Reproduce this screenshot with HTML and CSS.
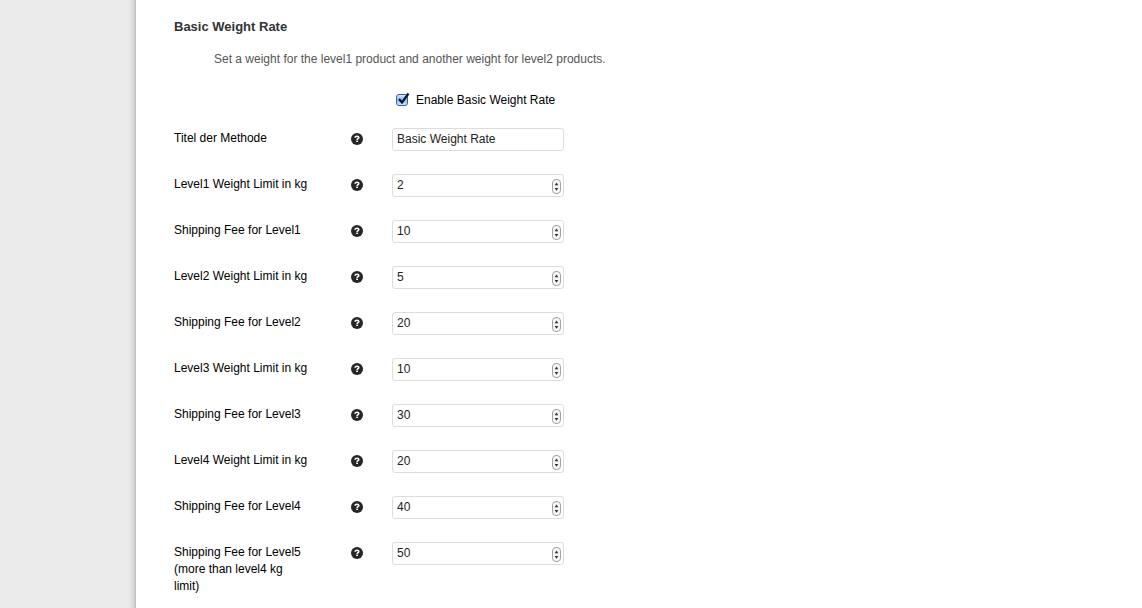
FILE: index.html
```html
<!DOCTYPE html>
<html lang="de">
<head>
<meta charset="utf-8">
<title>Basic Weight Rate</title>
<link rel="stylesheet" href="styles.css">
</head>
<body>
<svg class="defs" aria-hidden="true">
  <symbol id="help" viewBox="0 0 12 12">
    <circle cx="6" cy="6" r="6" fill="#262626"/>
    <path d="M4 4.700C4.100 3.600 4.900 3.300 6 3.300C7.100 3.300 7.800 3.700 7.800 4.600C7.800 5.700 6.100 5.600 6.100 6.900" fill="none" stroke="#fff" stroke-width="1.600"/>
    <rect x="5.200" y="7.600" width="1.800" height="1.400" fill="#fff"/>
  </symbol>
  <symbol id="stepper" viewBox="0 0 9 15">
    <rect x=".5" y=".5" width="8" height="14" rx="3.500" fill="#f6f6f6" stroke="#a2a2a2"/>
    <path d="M4.500 3.400L6.400 6.200H2.600zM4.500 11.800L6.400 9H2.600z" fill="#333"/>
  </symbol>
</svg>
<div class="layout">
  <aside class="sidebar"></aside>
  <main class="content">
    <h1 class="title">Basic Weight Rate</h1>
    <p class="description">Set a weight for the level1 product and another weight for level2 products.</p>
    <form class="settings">
      <div class="enable">
        <span class="check">
          <input class="check-input" type="checkbox" id="enabled" checked>
          <svg class="check-mark" viewBox="0 0 14 14" aria-hidden="true"><path d="M3 7L6 10.500L12.500 1.500" fill="none" stroke="#0c1530" stroke-width="2.200"/></svg>
        </span>
        <label for="enabled">Enable Basic Weight Rate</label>
      </div>
      <div class="rows">
        <div class="row">
          <label class="label" for="title">Titel der Methode</label>
          <svg class="help"><use href="#help"/></svg>
          <div class="field"><input class="input" type="text" id="title" value="Basic Weight Rate"></div>
        </div>
        <div class="row">
          <label class="label" for="limit1">Level1 Weight Limit in kg</label>
          <svg class="help"><use href="#help"/></svg>
          <div class="field"><input class="input" type="number" id="limit1" value="2"><svg class="stepper"><use href="#stepper"/></svg></div>
        </div>
        <div class="row">
          <label class="label" for="fee1">Shipping Fee for Level1</label>
          <svg class="help"><use href="#help"/></svg>
          <div class="field"><input class="input" type="number" id="fee1" value="10"><svg class="stepper"><use href="#stepper"/></svg></div>
        </div>
        <div class="row">
          <label class="label" for="limit2">Level2 Weight Limit in kg</label>
          <svg class="help"><use href="#help"/></svg>
          <div class="field"><input class="input" type="number" id="limit2" value="5"><svg class="stepper"><use href="#stepper"/></svg></div>
        </div>
        <div class="row">
          <label class="label" for="fee2">Shipping Fee for Level2</label>
          <svg class="help"><use href="#help"/></svg>
          <div class="field"><input class="input" type="number" id="fee2" value="20"><svg class="stepper"><use href="#stepper"/></svg></div>
        </div>
        <div class="row">
          <label class="label" for="limit3">Level3 Weight Limit in kg</label>
          <svg class="help"><use href="#help"/></svg>
          <div class="field"><input class="input" type="number" id="limit3" value="10"><svg class="stepper"><use href="#stepper"/></svg></div>
        </div>
        <div class="row">
          <label class="label" for="fee3">Shipping Fee for Level3</label>
          <svg class="help"><use href="#help"/></svg>
          <div class="field"><input class="input" type="number" id="fee3" value="30"><svg class="stepper"><use href="#stepper"/></svg></div>
        </div>
        <div class="row">
          <label class="label" for="limit4">Level4 Weight Limit in kg</label>
          <svg class="help"><use href="#help"/></svg>
          <div class="field"><input class="input" type="number" id="limit4" value="20"><svg class="stepper"><use href="#stepper"/></svg></div>
        </div>
        <div class="row">
          <label class="label" for="fee4">Shipping Fee for Level4</label>
          <svg class="help"><use href="#help"/></svg>
          <div class="field"><input class="input" type="number" id="fee4" value="40"><svg class="stepper"><use href="#stepper"/></svg></div>
        </div>
        <div class="row">
          <label class="label" for="fee5">Shipping Fee for Level5 (more than level4 kg limit)</label>
          <svg class="help"><use href="#help"/></svg>
          <div class="field"><input class="input" type="number" id="fee5" value="50"><svg class="stepper"><use href="#stepper"/></svg></div>
        </div>
      </div>
    </form>
  </main>
</div>
</body>
</html>
```
FILE: styles.css
```css
* { box-sizing: border-box; }
body {
  margin: 0;
  background: #fff;
  color: #000;
  font: 12px/17px "Liberation Sans", Arial, sans-serif;
}
.defs { position: absolute; width: 0; height: 0; }
.layout { display: flex; min-height: 100vh; }
.sidebar {
  flex: 0 0 136px;
  background: linear-gradient(to left, #bdbdbd, #d4d4d4 2px, #e3e3e3 5px, #ebebeb 8px);
}
.content { flex: 1; padding: 18px 38px 0; }
.title { margin: 0; font-size: 13px; line-height: 17px; color: #333; }
.description { margin: 16px 40px 0; color: #555; }
.settings { margin-top: 24px; }
.enable { display: flex; align-items: flex-start; gap: 7px; margin-left: 222px; }
.check { position: relative; width: 13px; height: 13px; margin-top: 1px; }
.check-input {
  appearance: none;
  display: block;
  width: 12px;
  height: 12px;
  margin: 1px 0 0;
  border: 1px solid #4a5f96;
  border-radius: 3px;
  background: linear-gradient(#d5e6fb, #83bbf0 50%, #c3ecff);
}
.check-mark { position: absolute; top: -1px; left: 0; width: 14px; height: 14px; pointer-events: none; }
.rows { margin-top: 19px; }
.row {
  display: grid;
  grid-template-columns: 148px 12px 172px;
  column-gap: 29px;
  align-items: start;
  min-height: 46px;
}
.label { padding: 2px 12px 0 0; }
.help { width: 12px; height: 12px; margin-top: 5px; }
.field { position: relative; }
.input {
  appearance: textfield;
  display: block;
  width: 100%;
  height: 23px;
  padding: 0 4px 2px;
  border: 1px solid #ddd;
  border-radius: 3px;
  background: #fff;
  color: #222;
  font: inherit;
}
.input::-webkit-inner-spin-button { appearance: none; margin: 0; }
.stepper { position: absolute; top: 5px; right: 3px; width: 9px; height: 15px; pointer-events: none; }
```
